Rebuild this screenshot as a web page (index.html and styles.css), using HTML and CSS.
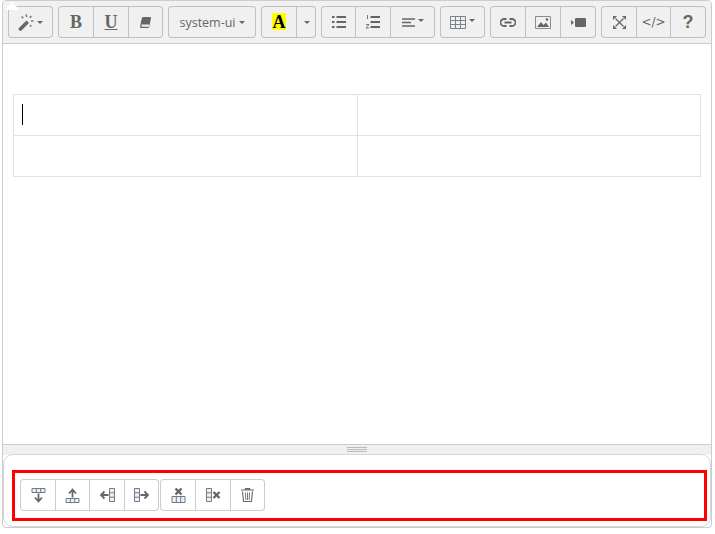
FILE: index.html
```html
<!DOCTYPE html>
<html lang="en">
<head>
<meta charset="utf-8">
<title>Editor</title>
<link rel="stylesheet" href="styles.css">
</head>
<body>
<div class="editor">
  <span class="notch"></span>
  <div class="toolbar">
    <div class="group g45">
      <button class="btn"><svg class="ic" width="18" height="18" viewBox="0 0 18 18"><path d="M1.200 14.800 8.500 7.500l2.500 2.500-7.300 7.300a1.700 1.700 0 0 1-2.500-2.500z" fill="#666"/><path d="M8 1.500l.8 2.500M3.500 3.500l1.800 1.600M13.500 3l-1.800 1.800M15.500 8h-2.500M12 12l1.300 1.500" stroke="#777" stroke-width="1.500" fill="none"/></svg><i class="caret"></i></button>
    </div>
    <div class="group g105">
      <button class="btn w36 serif">B</button>
      <button class="btn w36 serif under">U</button>
      <button class="btn"><svg width="11" height="11" viewBox="0 0 11 11"><path d="M3.300 0h6.400a1.200 1.200 0 0 1 1.200 1.500L9.300 9.400A2 2 0 0 1 7.500 11H1.300A1.200 1.200 0 0 1 .1 9.500L1.700 1.500A2 2 0 0 1 3.300 0z" fill="#666"/><path d="M1.700 7.600h7.600l-.5 2.100H1.400z" fill="#f0f0f0"/></svg></button>
    </div>
    <div class="group g88">
      <button class="btn label">system-ui<i class="caret small"></i></button>
    </div>
    <div class="group g55">
      <button class="btn w36"><span class="hilite">A</span></button>
      <button class="btn"><i class="caret"></i></button>
    </div>
    <div class="group g114">
      <button class="btn w35"><svg width="14" height="12" viewBox="0 0 14 12"><path d="M0 1h2.500M0 6h2.500M0 11h2.500M4.500 1H14M4.500 6H14M4.500 11H14" stroke="#666" stroke-width="2"/></svg></button>
      <button class="btn w36"><svg width="14" height="14" viewBox="0 0 14 14"><path d="M4.500 2H14M4.500 7H14M4.500 12H14" stroke="#666" stroke-width="2"/><path d="M1.500 0v4" stroke="#777" stroke-width="1"/><path d="M0 9.500h3l-3 3.500h3" stroke="#777" stroke-width="1" fill="none"/></svg></button>
      <button class="btn"><svg width="13" height="9" viewBox="0 0 13 9"><path d="M0 1h13M0 4.500h9M0 8h13" stroke="#666" stroke-width="1.500"/></svg><i class="caret gap raised"></i></button>
    </div>
    <div class="group g45">
      <button class="btn"><svg width="16" height="13" viewBox="0 0 16 13"><path d="M.5.500h15v12H.5zM.5 4.500h15M.5 8.500h15M5.500.500v12M10.500.500v12" stroke="#7a8290" fill="none"/></svg><i class="caret gap raised"></i></button>
    </div>
    <div class="group g106">
      <button class="btn w36"><svg width="16" height="9" viewBox="0 0 16 9"><path d="M6.500 1H4a3.500 3.500 0 0 0 0 7h2.500M9.500 1H12a3.500 3.500 0 0 1 0 7H9.500M4.500 4.500h7" stroke="#666" stroke-width="1.800" fill="none"/></svg></button>
      <button class="btn w36"><svg width="16" height="13" viewBox="0 0 16 13"><path d="M.5.500h15v12H.5z" stroke="#8a8a8a" fill="none"/><path d="M2 11l4-5 2.500 3L11 6.500l3 4.500z" fill="#666"/><circle cx="12" cy="3.500" r="1.300" fill="#666"/></svg></button>
      <button class="btn"><svg width="15" height="9" viewBox="0 0 15 9"><rect x="4" y="0" width="11" height="9" rx="1" fill="#666"/><path d="M0 2l3 2.500-3 2.500z" fill="#666"/></svg></button>
    </div>
    <div class="group g105">
      <button class="btn w36"><svg width="13" height="13" viewBox="0 0 13 13"><path d="M2.500 2.500l8 8M10.500 2.500l-8 8" stroke="#666" stroke-width="1.200"/><path d="M0 0h4L0 4zM13 0H9l4 4zM0 13h4l-4-4zM13 13H9l4-4z" fill="#666"/></svg></button>
      <button class="btn w35 code">&lt;/&gt;</button>
      <button class="btn help">?</button>
    </div>
  </div>
  <div class="content">
    <table class="grid">
      <tr><td><span class="cursor"></span></td><td></td></tr>
      <tr><td></td><td></td></tr>
    </table>
  </div>
  <div class="statusbar"><span class="grip"></span></div>
  <div class="panel">
    <div class="highlight">
      <div class="group sub">
        <button class="btn w36"><svg width="15" height="15" viewBox="0 0 15 15"><path d="M1 .500h13v4H1zM5.300.500v4M9.700.500v4" stroke="#6f7a8c" fill="#eef0f3"/><path d="M7.500 5.500v7.500M4 9.500l3.500 4 3.500-4" stroke="#666" stroke-width="1.800" fill="none"/></svg></button>
        <button class="btn w35"><svg width="15" height="15" viewBox="0 0 15 15"><path d="M1 10.500h13v4H1zM5.300 10.500v4M9.700 10.500v4" stroke="#6f7a8c" fill="#eef0f3"/><path d="M7.500 9.500V2M4 5.500l3.500-4 3.500 4" stroke="#666" stroke-width="1.800" fill="none"/></svg></button>
        <button class="btn w36"><svg width="15" height="14" viewBox="0 0 15 14"><path d="M9.500.500h5v13h-5zM9.500 4.800h5M9.500 9.200h5" stroke="#6f7a8c" fill="#eef0f3"/><path d="M8.500 7H1M4.500 3.500 1 7l3.500 3.500" stroke="#666" stroke-width="1.800" fill="none"/></svg></button>
        <button class="btn"><svg width="15" height="14" viewBox="0 0 15 14"><path d="M.5.500h5v13h-5zM.5 4.800h5M.5 9.200h5" stroke="#6f7a8c" fill="#eef0f3"/><path d="M6.500 7H14M10.500 3.500 14 7l-3.500 3.500" stroke="#666" stroke-width="1.800" fill="none"/></svg></button>
      </div>
      <div class="group sub">
        <button class="btn w36"><svg width="15" height="15" viewBox="0 0 15 15"><path d="M1 8.500h13v6H1zM5.300 8.500v6M9.700 8.500v6" stroke="#6f7a8c" fill="#eef0f3"/><path d="M4.500.500l6 6M10.500.500l-6 6" stroke="#666" stroke-width="2.400"/></svg></button>
        <button class="btn w36"><svg width="15" height="14" viewBox="0 0 15 14"><path d="M.5.500h5v13h-5zM.5 4.800h5M.5 9.200h5" stroke="#6f7a8c" fill="#eef0f3"/><path d="M7.500 4l6 6M13.500 4l-6 6" stroke="#666" stroke-width="2.400"/></svg></button>
        <button class="btn"><svg width="13" height="14" viewBox="0 0 13 14"><path d="M0 2h13M4.500 2V.6h4V2" stroke="#666" stroke-width="1.200" fill="none"/><path d="M1.500 3.500l1 10h8l1-10" stroke="#666" stroke-width="1.100" fill="none"/><path d="M4.500 4.500l.3 7.500M6.500 4.500V12M8.500 4.500l-.3 7.500" stroke="#6f7a8c" stroke-width="1"/></svg></button>
      </div>
    </div>
  </div>
</div>
</body>
</html>
```
FILE: styles.css
```css
* { box-sizing: border-box; }
html, body { margin: 0; padding: 0; background: #fff; }
body { padding-left: 2px; width: 715px; height: 534px; overflow: hidden; }

.editor {
  position: relative;
  width: 710px;
  height: 528px;
  display: flex;
  flex-direction: column;
  border: 1px solid #ccc;
  border-radius: 4px;
  background: #fff;
}
.notch {
  position: absolute;
  left: 2px;
  top: 0;
  border-left: 7.500px solid transparent;
  border-right: 7.500px solid transparent;
  border-bottom: 9px solid #fff;
}

.toolbar {
  display: flex;
  gap: 5px;
  height: 43px;
  padding: 5px;
  background: #f1f1f1;
  border-bottom: 1px solid #ccc;
  border-radius: 3px 3px 0 0;
}
.group { display: flex; height: 32px; }
.g45 { width: 45px; }
.g55 { width: 55px; }
.g88 { width: 88px; }
.g105 { width: 105px; }
.g106 { width: 106px; }
.g114 { width: 114px; }

.btn {
  flex: 1 1 0;
  min-width: 0;
  height: 32px;
  margin: 0 0 0 -1px;
  padding: 0;
  display: flex;
  align-items: center;
  justify-content: center;
  background: #f0f0f0;
  border: 1px solid rgba(0, 0, 0, .2);
  color: #666;
  font-family: "Open Sans", sans-serif;
  font-size: 12px;
  white-space: nowrap;
}
.btn:first-child { margin-left: 0; border-radius: 4px 0 0 4px; }
.btn:last-child { border-radius: 0 4px 4px 0; }
.btn:only-child { border-radius: 4px; }
.w36 { flex: 0 0 36px; }
.w35 { flex: 0 0 35px; }

.caret {
  display: inline-block;
  width: 0;
  height: 0;
  margin-left: 1px;
  border-left: 3.500px solid transparent;
  border-right: 3.500px solid transparent;
  border-top: 3.500px solid #666;
}
.caret.small { margin-left: 3px; border-left-width: 3px; border-right-width: 3px; border-top-width: 3px; }
.caret.gap { margin-left: 3px; }
.caret.raised { margin-bottom: 4px; }

.serif { font-family: "Liberation Serif", serif; font-size: 18px; font-weight: 700; }
.under { text-decoration: underline; text-underline-offset: 1px; }
.label { font-size: 12.500px; }
.hilite {
  display: block;
  width: 14px;
  height: 17px;
  margin-bottom: 1px;
  background: #ff0;
  color: #000;
  font-family: "Liberation Serif", serif;
  font-size: 18px;
  font-weight: 700;
  line-height: 19px;
  text-align: center;
}
.code { font-family: "DejaVu Sans", sans-serif; font-size: 12px; }
.help { font-family: "Liberation Sans", sans-serif; font-size: 18px; font-weight: 700; }

.content {
  flex: 1 1 0;
  padding: 50px 10px 10px;
  background: #fff;
}
.grid {
  width: 100%;
  table-layout: fixed;
  border-collapse: collapse;
}
.grid td {
  height: 41px;
  padding: 9px 8px;
  border: 1px solid #e1e1e6;
  vertical-align: top;
}
.cursor {
  display: block;
  width: 1px;
  height: 21px;
  background: #000;
}

.statusbar {
  height: 11px;
  display: flex;
  justify-content: center;
  padding-top: 2px;
  background: #f0f0f0;
  border-top: 1px solid #ccc;
}
.grip {
  width: 20px;
  height: 5px;
  border-top: 1px solid #bbb;
  border-bottom: 1px solid #bbb;
  background: linear-gradient(#bbb, #bbb) 0 1px / 20px 1px no-repeat;
}

.panel {
  height: 73px;
  padding: 15px 3px 0 8px;
  background: #fff;
  border: 1px solid #d6d6d6;
  border-radius: 10px;
  margin-top: -1px;
}
.highlight {
  display: flex;
  gap: 1px;
  height: 51px;
  padding: 6px 5px;
  border: 3px solid #f00;
}
.highlight .group { width: 139px; }
.highlight .group + .group { width: 105px; }
.sub .btn { background: #fff; }
```
